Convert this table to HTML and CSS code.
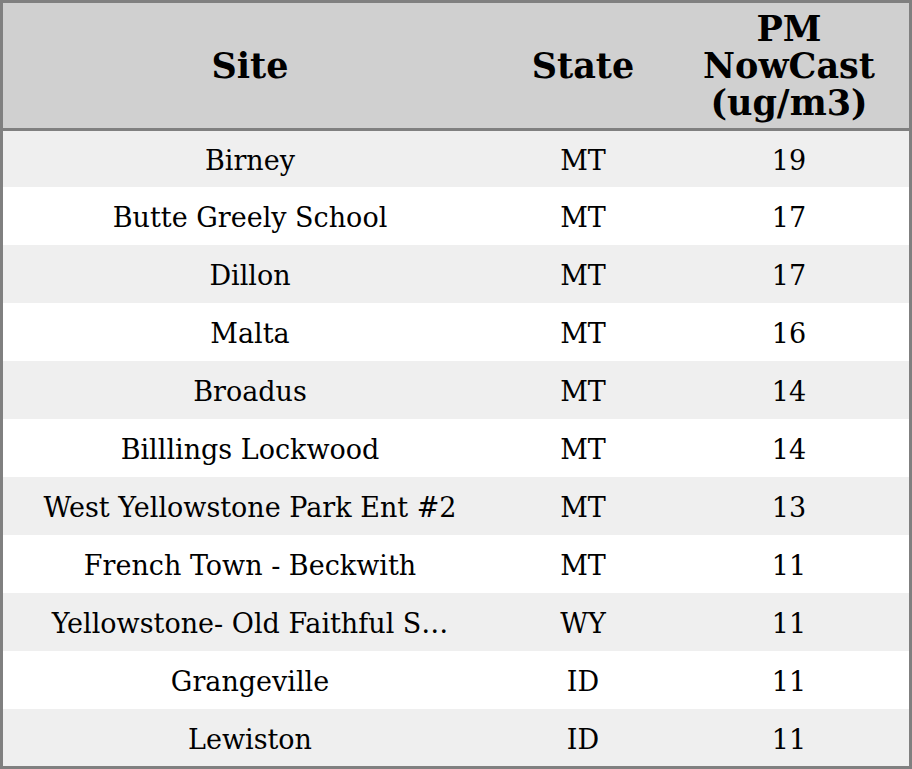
FILE: index.html
```html
<!DOCTYPE html>
<html>
<head>
<meta charset="utf-8">
<link rel="stylesheet" href="styles.css">
</head>
<body>
<table class="grid">
  <colgroup>
    <col class="c-site">
    <col class="c-state">
    <col class="c-pm">
  </colgroup>
  <thead>
    <tr class="head">
      <th>Site</th>
      <th>State</th>
      <th>PM<br>NowCast<br>(ug/m3)</th>
    </tr>
  </thead>
  <tbody>
    <tr class="odd first"><td>Birney</td><td>MT</td><td>19</td></tr>
    <tr><td>Butte Greely School</td><td>MT</td><td>17</td></tr>
    <tr class="odd"><td>Dillon</td><td>MT</td><td>17</td></tr>
    <tr><td>Malta</td><td>MT</td><td>16</td></tr>
    <tr class="odd"><td>Broadus</td><td>MT</td><td>14</td></tr>
    <tr><td>Billlings Lockwood</td><td>MT</td><td>14</td></tr>
    <tr class="odd"><td>West Yellowstone Park Ent #2</td><td>MT</td><td>13</td></tr>
    <tr><td>French Town - Beckwith</td><td>MT</td><td>11</td></tr>
    <tr class="odd"><td>Yellowstone- Old Faithful S…</td><td>WY</td><td>11</td></tr>
    <tr><td>Grangeville</td><td>ID</td><td>11</td></tr>
    <tr class="odd last"><td>Lewiston</td><td>ID</td><td>11</td></tr>
  </tbody>
</table>
</body>
</html>
```
FILE: styles.css
```css
html, body {
  margin: 0;
  padding: 0;
  background: #ffffff;
}
.grid {
  border-collapse: separate;
  border-spacing: 0;
  table-layout: fixed;
  width: 912px;
  border: 3px solid #808080;
  font-family: "DejaVu Serif", serif;
  color: #000;
}
.c-site { width: 494px; }
.c-state { width: 172px; }
.c-pm { width: 240px; }
.grid th, .grid td {
  padding: 0;
  text-align: center;
  white-space: nowrap;
  overflow: hidden;
}
.head th {
  background: #d0d0d0;
  height: 125px;
  border-bottom: 3px solid #808080;
  font-size: 35px;
  font-weight: bold;
  line-height: 37px;
}
.grid td {
  height: 54px;
  padding-top: 4px;
  font-size: 27px;
  line-height: 32px;
  background: #ffffff;
}
.grid tr.odd td {
  background: #efefef;
}
.grid tr.first td { height: 52px; }
.grid tr.last td { height: 53px; }
```
